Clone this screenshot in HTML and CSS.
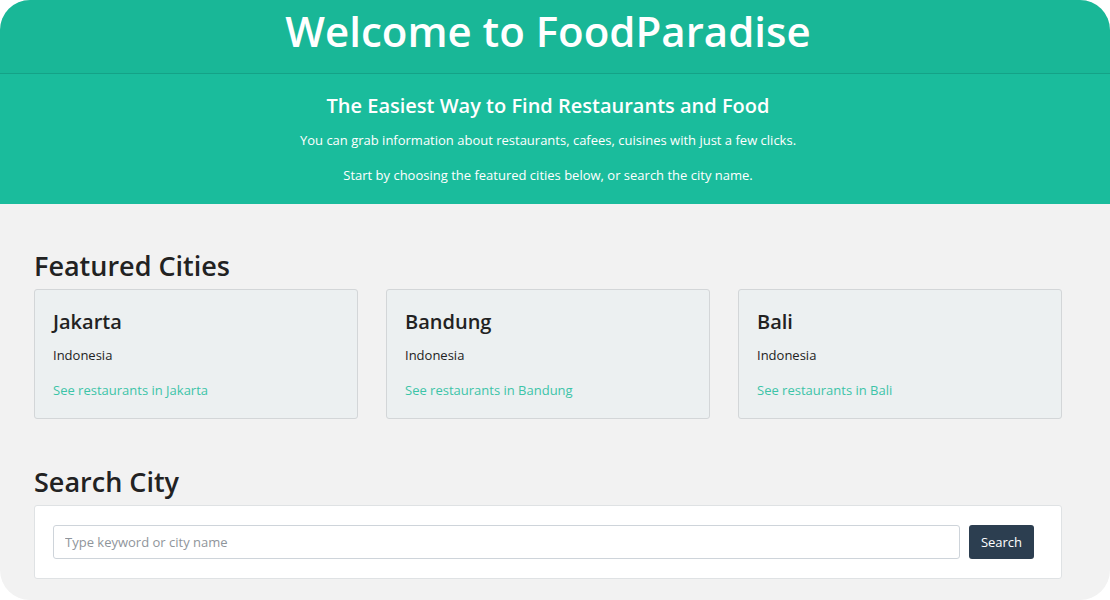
FILE: index.html
```html
<!DOCTYPE html>
<html>
<head>
<meta charset="utf-8">
<link rel="stylesheet" href="styles.css">
</head>
<body>
<div class="page">
  <header class="top">
    <h1 class="title">Welcome to FoodParadise</h1>
  </header>
  <section class="hero">
    <h2 class="hero-title">The Easiest Way to Find Restaurants and Food</h2>
    <p class="hero-text">You can grab information about restaurants, cafees, cuisines with just a few clicks.</p>
    <p class="hero-text">Start by choosing the featured cities below, or search the city name.</p>
  </section>
  <main class="main">
    <h2 class="section-title">Featured Cities</h2>
    <div class="cards">
      <div class="card">
        <h3 class="card-title">Jakarta</h3>
        <p class="card-sub">Indonesia</p>
        <a class="card-link" href="#">See restaurants in Jakarta</a>
      </div>
      <div class="card">
        <h3 class="card-title">Bandung</h3>
        <p class="card-sub">Indonesia</p>
        <a class="card-link" href="#">See restaurants in Bandung</a>
      </div>
      <div class="card">
        <h3 class="card-title">Bali</h3>
        <p class="card-sub">Indonesia</p>
        <a class="card-link" href="#">See restaurants in Bali</a>
      </div>
    </div>
    <h2 class="section-title search-title">Search City</h2>
    <div class="search-box">
      <input class="search-input" type="text" placeholder="Type keyword or city name">
      <button class="search-btn">Search</button>
    </div>
  </main>
</div>
</body>
</html>
```

FILE: styles.css
```css
html, body {
  margin: 0;
  padding: 0;
  background: #ffffff;
}
body {
  font-family: "Open Sans", "Noto Sans", sans-serif;
  color: #222;
}
.page {
  width: 1110px;
  height: 600px;
  border-radius: 30px;
  overflow: hidden;
  background: #f2f2f2;
}
.top {
  background: #19b797;
  height: 73px;
  border-bottom: 1px solid #14a287;
  padding-right: 14px;
  text-align: center;
}
.title {
  margin: 0;
  color: #fff;
  font-size: 42px;
  font-weight: 600;
  line-height: 62px;
  letter-spacing: 0;
}
.hero {
  background: #1abc9c;
  height: 130px;
  padding-right: 14px;
  text-align: center;
  color: #fff;
  box-sizing: border-box;
  padding-top: 18px;
}
.hero-title {
  margin: 0 0 3px;
  font-size: 20px;
  font-weight: 600;
  line-height: 28px;
}
.hero-text {
  margin: 0;
  font-size: 13px;
  line-height: 35px;
}
.main {
  padding: 42px 48px 0 34px;
}
.section-title {
  margin: 0;
  font-size: 27px;
  font-weight: 600;
  line-height: 40px;
  color: #222;
}
.cards {
  display: grid;
  grid-template-columns: repeat(3, 1fr);
  gap: 28px;
  margin-top: 3px;
}
.card {
  background: #ecf0f1;
  border: 1px solid #d3d6d8;
  border-radius: 3px;
  height: 130px;
  box-sizing: border-box;
  padding: 18px 18px 0;
}
.card-title {
  margin: 0;
  font-size: 20px;
  font-weight: 600;
  line-height: 28px;
  color: #222;
}
.card-sub {
  margin: 9px 0 0;
  font-size: 13px;
  line-height: 20px;
  color: #222;
}
.card-link {
  display: block;
  margin-top: 15px;
  font-size: 13px;
  line-height: 20px;
  color: #3cc4a8;
  text-decoration: none;
}
.search-title {
  margin-top: 43px;
}
.search-box {
  margin-top: 3px;
  background: #fff;
  border: 1px solid #dfe2e4;
  border-radius: 3px;
  height: 74px;
  box-sizing: border-box;
  display: flex;
  align-items: center;
  padding: 0 27px 0 18px;
  gap: 9px;
}
.search-input {
  flex: 1;
  height: 34px;
  box-sizing: border-box;
  border: 1px solid #ced4da;
  border-radius: 3px;
  padding: 0 11px;
  font-family: inherit;
  font-size: 13px;
  color: #222;
  outline: none;
}
.search-input::placeholder {
  color: #8f959b;
}
.search-btn {
  width: 65px;
  height: 34px;
  border: none;
  border-radius: 3px;
  background: #2c3e50;
  color: #fff;
  font-family: inherit;
  font-size: 13px;
  padding: 0;
}
```
